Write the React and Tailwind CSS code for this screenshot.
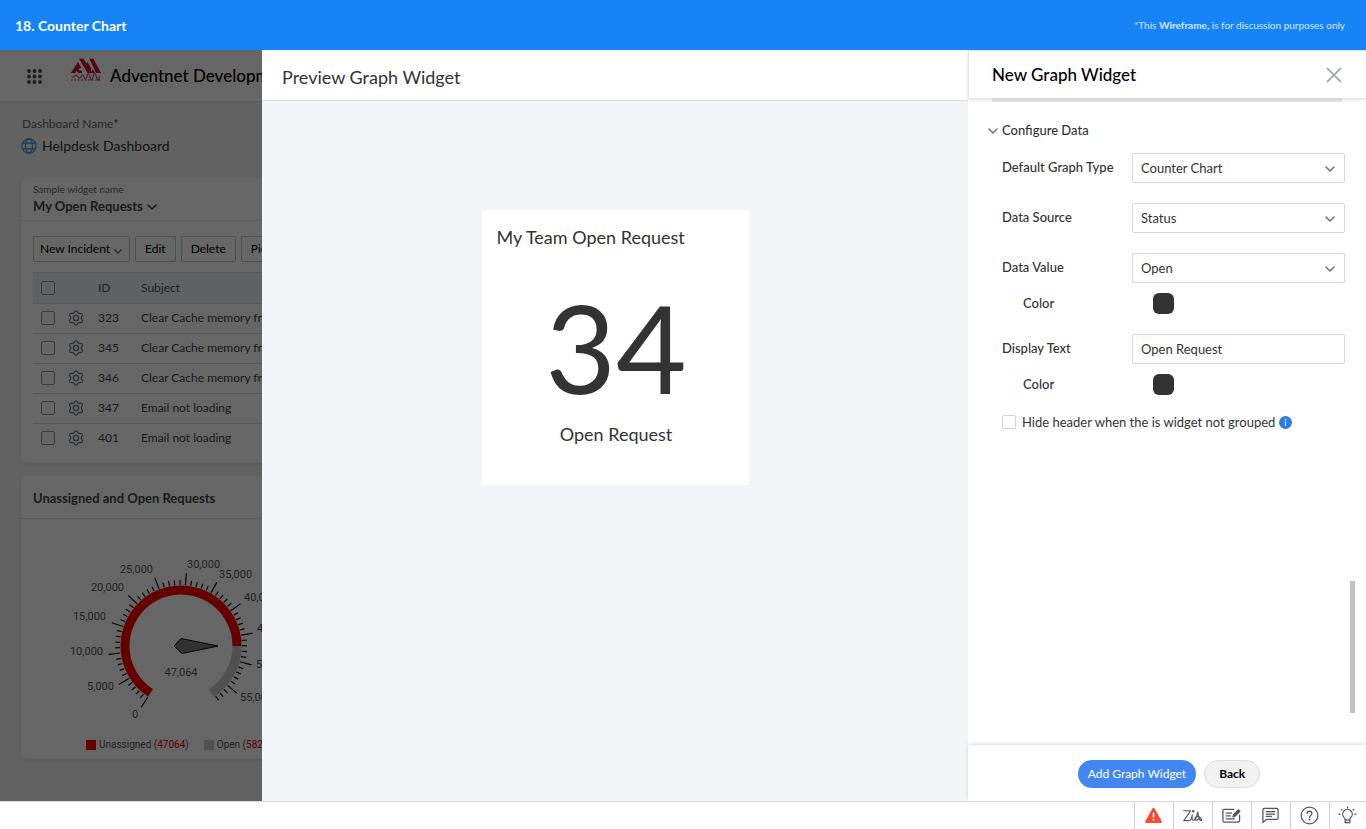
import React from 'react';

const ROWS = [
    { id: 323, subject: 'Clear Cache memory from browser' },
    { id: 345, subject: 'Clear Cache memory from browser' },
    { id: 346, subject: 'Clear Cache memory from browser' },
    { id: 347, subject: 'Email not loading' },
    { id: 401, subject: 'Email not loading' },
];

// x and y are measured from the centre of the dial
const DIAL_LABELS = [
    { text: '0', x: -46, y: 72, anchor: 'middle' },
    { text: '5,000', x: -67, y: 44, anchor: 'end' },
    { text: '10,000', x: -78, y: 9, anchor: 'end' },
    { text: '15,000', x: -75, y: -26, anchor: 'end' },
    { text: '20,000', x: -57, y: -55, anchor: 'end' },
    { text: '25,000', x: -28, y: -73, anchor: 'end' },
    { text: '30,000', x: 6, y: -78, anchor: 'start' },
    { text: '35,000', x: 38, y: -68, anchor: 'start' },
    { text: '40,000', x: 63, y: -45, anchor: 'start' },
    { text: '45,000', x: 76, y: -14, anchor: 'start' },
    { text: '50,000', x: 75, y: 22, anchor: 'start' },
    { text: '55,000', x: 59, y: 55, anchor: 'start' },
];

const START_ANGLE = -147;
const DEG_PER_THOUSAND = 5.04;

const polar = (angle, r) => {
    const rad = (angle * Math.PI) / 180;
    return [r * Math.sin(rad), -r * Math.cos(rad)];
};

const arcPath = (from, to, r) => {
    const [x1, y1] = polar(from, r);
    const [x2, y2] = polar(to, r);
    return `M${x1} ${y1}A${r} ${r} 0 ${to - from > 180 ? 1 : 0} 1 ${x2} ${y2}`;
};

const Chevron = ({ className }) => (
    <svg viewBox="0 0 10 6" className={className} fill="none" stroke="currentColor" strokeWidth="1.6" strokeLinecap="round" strokeLinejoin="round" aria-hidden="true">
        <path d="M1 1l4 4 4-4" />
    </svg>
);

const GearIcon = () => (
    <svg viewBox="0 0 16 16" className="-ml-px h-4 w-4" fill="none" stroke="#6b7680" strokeWidth="1.2" strokeLinejoin="round" aria-hidden="true">
        <path d="M5.900 2.900Q6.500 .8 8 .8T10.100 2.900Q10.600 3.600 11.500 3.400Q13.600 2.900 14.300 4.200T13.500 7Q13 8 13.500 9Q15 10.600 14.300 11.800T11.500 12.600Q10.600 12.400 10.100 13.100Q9.500 15.200 8 15.200T5.900 13.100Q5.400 12.400 4.500 12.600Q2.400 13.100 1.700 11.800T2.500 9Q3 8 2.500 7Q1 5.400 1.700 4.200T4.500 3.400Q5.400 3.600 5.900 2.900Z" />
        <circle cx="8" cy="8" r="2.600" />
    </svg>
);

const AppsIcon = () => (
    <svg viewBox="0 0 15 15" className="mt-0.5 h-[15px] w-[15px] shrink-0" fill="#4a4f54" aria-hidden="true">
        {[2, 7.5, 13].map((y) => [2, 7.5, 13].map((x) => <circle key={`${x}-${y}`} cx={x} cy={y} r="1.9" />))}
    </svg>
);

const CompanyLogo = () => (
    <svg viewBox="0 0 32 24" className="h-6 w-8" fill="#c8102e" aria-hidden="true">
        <path d="M9 .8h4.500L22.500 15h-5zM8 4l3.500 6H9.800L8.500 12l3.500 1v2H8.500L6.500 13 5 15H.8zM19.500 .8h4L31 15h-5zM17.500 4l4 6.500-1.200 2-4.300-6.500zM22.500 11l2.500 4h-3.500z" />
        <path d="M1.500 18.500q2 1.500 3.500-.5t3 1 3-.5 3 .5 3-1 3 1 3-.5 3.500.5 3-1" fill="none" stroke="#c8102e" strokeWidth="1.300" opacity=".7" />
        <path d="M1 22h30" stroke="#c8102e" strokeWidth="1.400" strokeDasharray="1.700 1.700" opacity=".7" />
    </svg>
);

const GlobeIcon = () => (
    <svg viewBox="0 0 16 16" className="h-4 w-4" fill="none" stroke="#3d8fe0" strokeWidth="1.200" aria-hidden="true">
        <circle cx="8" cy="8" r="7.200" />
        <ellipse cx="8" cy="8" rx="3.500" ry="7.200" />
        <path d="M1.500 5.200h13M1.500 10.800h13" />
    </svg>
);

const Gauge = () => (
    <svg viewBox="-160 -127 320 216" className="h-[216px] w-[320px] shrink-0" role="img" aria-label="47,064 unassigned requests">
        <path d={arcPath(-147, 90, 56)} fill="none" stroke="#ff0000" strokeWidth="9" />
        <path d={arcPath(90, 147, 56)} fill="none" stroke="#c8c8c8" strokeWidth="9" />
        {Array.from({ length: 59 }, (_, i) => {
            const angle = START_ANGLE + i * DEG_PER_THOUSAND;
            const [x1, y1] = polar(angle, 61);
            const [x2, y2] = polar(angle, i % 5 === 0 ? 73 : 66);
            return <line key={i} x1={x1} y1={y1} x2={x2} y2={y2} stroke="#111" strokeWidth="1.200" />;
        })}
        <polygon points="-7,0 0,-7.500 37,0 1,7.500" fill="#7c7c7c" stroke="#000" />
        <g fill="#555" fontFamily="Roboto, sans-serif" fontSize="11">
            {DIAL_LABELS.map((label) => (
                <text key={label.text} x={label.x} y={label.y} textAnchor={label.anchor}>{label.text}</text>
            ))}
            <text x="0" y="30" textAnchor="middle">47,064</text>
        </g>
    </svg>
);

const ToolbarButton = ({ children }) => (
    <button type="button" className="flex h-[26px] shrink-0 items-center gap-1 rounded-xs border border-[#c6c6c6] text-xs text-black first:pl-1.5 first:pr-[7px] [&:not(:first-child)]:px-[9px]">
        {children}
    </button>
);

const Dashboard = () => (
    <div className="relative w-[262px] shrink-0 overflow-hidden whitespace-nowrap bg-[#f4f6f8]">
        <header className="flex h-[51px] items-center bg-white pl-[27px] shadow-sm">
            <AppsIcon />
            <div className="mb-3 ml-7 shrink-0">
                <CompanyLogo />
            </div>
            <h2 className="ml-2 text-[17px] font-medium text-black">Adventnet Development</h2>
        </header>
        <div className="flex w-[600px] flex-col pl-[21px]">
            <p className="mt-3.5 pl-px text-xs leading-[18px] text-[#666]">
                Dashboard Name<span className="font-bold text-[#ff0000]">*</span>
            </p>
            <div className="mt-[3px] flex items-center gap-[5px]">
                <GlobeIcon />
                <span className="text-sm leading-5 text-[#333]">Helpdesk Dashboard</span>
            </div>

            <section className="mt-[22px] h-[285px] rounded-md bg-white shadow-sm">
                <div className="h-[43px] border-b border-[#e4e4e4] pl-3 pt-[3px]">
                    <p className="text-[10px] leading-4 text-[#666]">Sample widget name</p>
                    <h3 className="flex items-center gap-1 text-[13px] font-bold leading-[18px] text-[#444]">
                        My Open Requests
                        <Chevron className="mt-0.5 h-1.5 w-2.5" />
                    </h3>
                </div>
                <div className="flex gap-[5px] pl-3 pt-[15px]">
                    <ToolbarButton>New Incident <Chevron className="mt-1 h-[5px] w-2 text-[#555]" /></ToolbarButton>
                    <ToolbarButton>Edit</ToolbarButton>
                    <ToolbarButton>Delete</ToolbarButton>
                    <ToolbarButton>Pick up</ToolbarButton>
                </div>
                <table className="ml-3 mt-2.5 w-[560px] table-fixed border-collapse text-left text-xs text-[#444]">
                    <thead>
                        <tr className="h-[31px] border-y border-[#dcdfe2] bg-[#eef3fa] text-[#555]">
                            <th className="w-9 pl-2"><input type="checkbox" aria-label="Select all" className="block h-3.5 w-3.5 appearance-none rounded-xs border border-[#87939a]" /></th>
                            <th className="w-[29px]" />
                            <th className="w-[43px] font-normal">ID</th>
                            <th className="font-normal">Subject</th>
                        </tr>
                    </thead>
                    <tbody>
                        {ROWS.map((row) => (
                            <tr key={row.id} className="h-[30px] border-b border-[#dcdcdc] last:border-0">
                                <td className="pb-px pl-2"><input type="checkbox" aria-label={`Select ${row.id}`} className="block h-3.5 w-3.5 appearance-none rounded-xs border border-[#87939a]" /></td>
                                <td className="pb-px"><GearIcon /></td>
                                <td className="pb-px">{row.id}</td>
                                <td className="pb-px">{row.subject}</td>
                            </tr>
                        ))}
                    </tbody>
                </table>
            </section>

            <section className="mt-[13px] h-[283px] rounded-md bg-white shadow-sm">
                <h3 className="flex h-[43px] items-center border-b border-[#e4e4e4] pl-3 pt-1 text-[13px] font-bold text-[#444]">
                    Unassigned and Open Requests
                </h3>
                <Gauge />
                <div className="flex items-center pl-[65px] pt-0.5 font-[Roboto,sans-serif] text-[10px] leading-4 text-[#555]">
                    <span className="mr-[3px] h-2.5 w-2.5 bg-[#ff0000]" />
                    <span>Unassigned (<span className="text-[#c00]">47064</span>)</span>
                    <span className="ml-[15px] mr-[3px] h-2.5 w-2.5 bg-[#c8c8c8]" />
                    <span>Open (<span className="text-[#c00]">58240</span>)</span>
                </div>
            </section>
        </div>
        <div className="absolute inset-0 bg-black/60" />
    </div>
);

const PreviewPanel = () => (
    <section className="flex min-w-0 flex-1 flex-col bg-[#f4f5f8]">
        <h2 className="flex h-[51px] items-center border-b border-[#e2e2e2] bg-white px-5 pt-1 text-lg text-[#333]">
            Preview Graph Widget
        </h2>
        <div className="mx-auto mt-[109px] flex h-[275px] w-[267px] flex-col bg-white px-[15px] text-[#333]">
            <h3 className="pt-[13px] text-lg leading-7">My Team Open Request</h3>
            <div className="mt-9 pl-0.5 text-center text-[122px] leading-[120px]">34</div>
            <p className="mt-[13px] pl-0.5 text-center text-lg leading-7">Open Request</p>
        </div>
    </section>
);

const SelectField = ({ id, label, value }) => (
    <div className="flex items-center">
        <label htmlFor={id} className="w-[130px] shrink-0 pb-0.5 font-medium">{label}</label>
        <div className="relative flex-1">
            <select id={id} defaultValue={value} className="block h-[30px] w-full appearance-none rounded-xs border border-[#d5d7d9] bg-white px-2 text-[13px]">
                <option>{value}</option>
            </select>
            <Chevron className="pointer-events-none absolute right-2.5 top-[13px] h-1.5 w-2.5 text-[#6b7780]" />
        </div>
    </div>
);

const ColorField = ({ id }) => (
    <div className="mt-2.5 flex items-center">
        <label htmlFor={id} className="w-[151px] pl-[21px] leading-[19px] font-medium">Color</label>
        <input
            id={id}
            type="color"
            defaultValue="#333333"
            className="h-[21px] w-[21px] appearance-none overflow-hidden rounded-md border-0 bg-[#333] p-0 [&::-webkit-color-swatch-wrapper]:p-0 [&::-webkit-color-swatch]:border-0"
        />
    </div>
);

const ConfigPanel = () => (
    <aside className="flex w-[398px] shrink-0 flex-col bg-white text-[#333]">
        <header className="z-10 flex h-12 items-center justify-between border-l border-t border-[#e4e4e4] pl-[23px] pr-6 shadow-[0_2px_4px_rgba(0,0,0,0.12)]">
            <h2 className="text-[17px] font-medium text-black">New Graph Widget</h2>
            <button type="button" aria-label="Close">
                <svg viewBox="0 0 16 16" className="h-4 w-4" stroke="#a9adb0" strokeWidth="1.800" strokeLinecap="round">
                    <path d="M1.500 1.500l13 13M14.500 1.500l-13 13" />
                </svg>
            </button>
        </header>
        <div className="relative flex-1 pl-[34px] pr-[21px] text-[13px] leading-5">
            <div className="-ml-2.5 mr-[3px] h-1 bg-[#e9e9e9]" />
            <button type="button" className="-ml-3.5 mt-[18px] flex items-center gap-1 font-medium">
                <Chevron className="mt-0.5 h-1.5 w-2.5 text-[#6b7780]" />
                Configure Data
            </button>
            <div className="mt-[13px] flex flex-col gap-5">
                <SelectField id="graph-type" label="Default Graph Type" value="Counter Chart" />
                <SelectField id="data-source" label="Data Source" value="Status" />
                <div>
                    <SelectField id="data-value" label="Data Value" value="Open" />
                    <ColorField id="value-color" />
                </div>
                <div>
                    <div className="flex items-center">
                        <label htmlFor="display-text" className="w-[130px] shrink-0 pb-0.5 font-medium">Display Text</label>
                        <input id="display-text" type="text" defaultValue="Open Request" className="h-[30px] min-w-0 flex-1 rounded-xs border border-[#d5d7d9] px-2" />
                    </div>
                    <ColorField id="text-color" />
                </div>
            </div>
            <div className="mt-[17px] flex items-center">
                <input id="hide-header" type="checkbox" className="h-3.5 w-3.5 appearance-none rounded-xs border border-[#d0d2d4]" />
                <label htmlFor="hide-header" className="ml-1.5">Hide header when the is widget not grouped</label>
                <svg viewBox="0 0 13 13" className="ml-1 h-[13px] w-[13px]" aria-hidden="true">
                    <circle cx="6.500" cy="6.500" r="6.500" fill="#2a7de8" />
                    <circle cx="6.500" cy="3.500" r=".8" fill="#fff" />
                    <rect x="6" y="5.200" width="1" height="4.800" fill="#fff" />
                </svg>
            </div>
            <div className="absolute bottom-8 right-[11px] h-[132px] w-[5px] bg-[#c1c1c1]" />
        </div>
        <footer className="flex h-14 items-center justify-center gap-2 pl-1 pt-0.5 shadow-[0_-1px_4px_rgba(0,0,0,0.15)]">
            <button type="button" className="h-7 rounded-full bg-[#4287f0] px-2.5 text-xs text-white">Add Graph Widget</button>
            <button type="button" className="h-7 rounded-full border border-[#dcdcdc] bg-[#f2f2f2] px-3.5 text-xs font-bold text-black">Back</button>
        </footer>
    </aside>
);

const stroke = { fill: 'none', stroke: '#555', strokeWidth: 1.3, strokeLinecap: 'round', strokeLinejoin: 'round' };

const TOOLS = [
    {
        label: 'Alerts',
        icon: (
            <>
                <path d="M10 3.300L17.500 16.700H2.500z" fill="#f94a38" stroke="#f94a38" strokeWidth="2.600" strokeLinejoin="round" />
                <path d="M10 7v5" stroke="#fff" strokeWidth="1.700" />
                <circle cx="10" cy="14.500" r="1" fill="#fff" />
            </>
        ),
    },
    {
        label: 'Zia',
        icon: (
            <g {...stroke}>
                <path d="M.8 5H8L.8 15.500H6C8.500 15.500 9.300 12 9.800 9.500C9.300 12 9.300 15 10.800 15C13 15 14.800 10 15.500 6.500C16 10 17.500 15.500 19 15.500C20 14.500 18.500 11 16 10.800C13.500 10.800 12.300 12.500 12.800 14C13.500 15.500 15.500 15 16.800 13" />
                <circle cx="10.800" cy="5.500" r=".7" />
            </g>
        ),
    },
    {
        label: 'Notes',
        icon: (
            <g {...stroke}>
                <path d="M12.500 3.500H2.500Q1 3.500 1 5V15.500Q1 17 2.500 17H17Q18.500 17 18.500 15.500V9.500M4.500 7.500H10M4.500 10.500H9M4.500 13.500H13" />
                <path d="M11.500 11.500L12.200 9.200L17.200 4L18.800 5.500L13.700 10.800Z" fill="#555" />
            </g>
        ),
    },
    {
        label: 'Chat',
        icon: <path {...stroke} d="M3.500 2.500H16.500Q18 2.500 18 4V12.500Q18 14 16.500 14H6L2 17.500V4Q2 2.500 3.500 2.500ZM5.500 6H14.500M5.500 8.500H14.500M5.500 11H11" />,
    },
    {
        label: 'Help',
        icon: (
            <g {...stroke}>
                <circle cx="10" cy="10" r="8.800" />
                <path d="M7.500 8Q7.500 5.500 10 5.500T12.500 8Q12.500 9.200 11.300 10T10 12" />
                <circle cx="10" cy="14.300" r=".4" fill="#555" />
            </g>
        ),
    },
    {
        label: 'Ideas',
        icon: <path {...stroke} d="M7.500 14.500Q7.500 13 6.300 12A5 5 0 1 1 13.700 12Q12.500 13 12.500 14.500V17.500H7.500ZM7.500 14.700H12.500M10 1V2M3.500 3.500L4.300 4.300M16.500 3.500L15.700 4.300M1 8.500H2.300M17.700 8.500H19" />,
    },
];

export default function App() {
    return (
        <div className="flex min-h-screen flex-col overflow-hidden bg-white font-[Lato,sans-serif]">
            <header className="flex h-[50px] shrink-0 items-center justify-between bg-[#1683f7] pl-[15px] pr-[21px] text-white">
                <h1 className="pt-0.5 text-sm font-bold">18. Counter Chart</h1>
                <p className="text-[10px] text-white/80">
                    *This <strong>Wireframe,</strong> is for discussion purposes only
                </p>
            </header>
            <main className="flex flex-1">
                <Dashboard />
                <PreviewPanel />
                <ConfigPanel />
            </main>
            <footer className="flex h-7 shrink-0 justify-end border-t border-[#d8d8d8]">
                {TOOLS.map((tool) => (
                    <button key={tool.label} type="button" aria-label={tool.label} className="flex w-[39px] items-center justify-center border-l border-[#cfcfcf] pr-0.5 last:w-[37px]">
                        <svg viewBox="0 0 20 20" className="h-[19px] w-[19px]" aria-hidden="true">{tool.icon}</svg>
                    </button>
                ))}
            </footer>
        </div>
    );
}
